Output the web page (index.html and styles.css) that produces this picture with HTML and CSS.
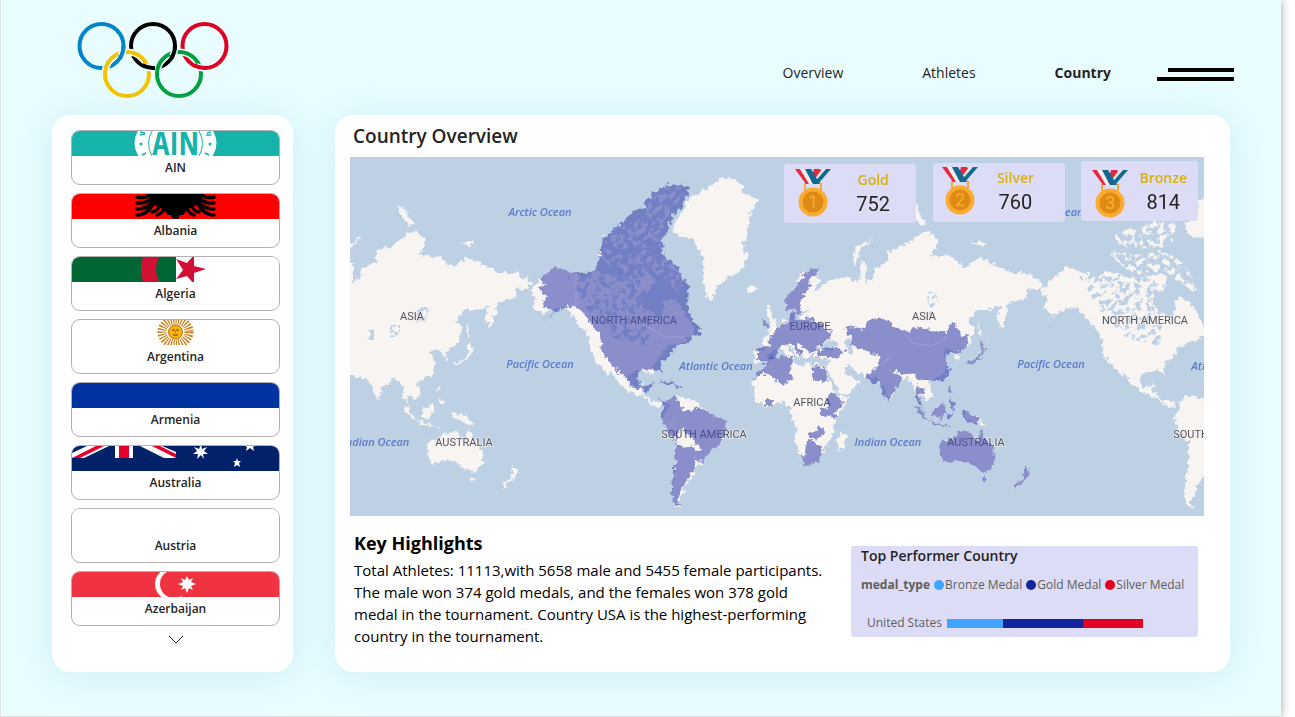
FILE: index.html
```html
<!DOCTYPE html>
<html lang="en">
<head>
<meta charset="utf-8">
<title>Country Overview</title>
<link rel="stylesheet" href="styles.css">
</head>
<body>
<div class="page">
  <header class="header">
    <svg class="rings" viewBox="77 21 152 78" role="img" aria-label="Olympic rings" fill="none">
      <g stroke-width="4">
        <circle cx="101.500" cy="46" r="22" stroke="#0085c7"/>
        <circle cx="153" cy="46" r="22" stroke="#000"/>
        <circle cx="204.500" cy="46" r="22" stroke="#df0024"/>
        <circle cx="127" cy="74" r="22" stroke="#e9fdff" stroke-width="7"/>
        <circle cx="179" cy="74" r="22" stroke="#e9fdff" stroke-width="7"/>
        <circle cx="127" cy="74" r="22" stroke="#f4c300"/>
        <circle cx="179" cy="74" r="22" stroke="#009f3d"/>
      </g>
      <path d="M123.300 49.100A22 22 0 0 1 121.100 56M174.800 49.100A22 22 0 0 1 172.600 56M151.800 68A22 22 0 0 1 144.800 66.400M203.300 68A22 22 0 0 1 196.300 66.400" stroke="#e9fdff" stroke-width="7"/>
      <g stroke-width="4">
        <path d="M123.500 46A22 22 0 0 1 119.500 58.600" stroke="#0085c7"/>
        <path d="M175 46A22 22 0 0 1 171 58.600M154.900 67.900A22 22 0 0 1 142 65" stroke="#000"/>
        <path d="M206.400 67.900A22 22 0 0 1 193.500 65" stroke="#df0024"/>
      </g>
    </svg>
    <nav class="nav">
      <a href="#">Overview</a>
      <a href="#">Athletes</a>
      <a href="#" class="current" aria-current="page">Country</a>
    </nav>
    <button class="menu" aria-label="Menu"><span></span><span></span></button>
  </header>

  <main class="main">
    <aside class="sidebar">
      <button class="country">
        <svg viewBox="0 0 207 25" preserveAspectRatio="xMidYMid slice"><path fill="#17b2aa" d="M0 0h207v25H0z"/><ellipse cx="103.500" cy="12" rx="41" ry="30" fill="#fff"/><g fill="none" stroke="#17b2aa"><path d="M80 0q-7 12 0 25M127 0q7 12 0 25"/></g><circle cx="69" cy="13" r="1.500" fill="#17b2aa"/><circle cx="138" cy="13" r="1.500" fill="#17b2aa"/><path d="M68 1l5 1M68 4l5-1M70 24l4-2M139 1l-4 1M139 4l-5 0M137 24l-4-2" stroke="#17b2aa" stroke-width="1.500"/><text class="ain" x="103.500" y="24" text-anchor="middle">AIN</text></svg>
        <span>AIN</span></button>
      <button class="country">
        <svg viewBox="0 0 207 25" preserveAspectRatio="xMidYMid slice"><path fill="#f00" d="M0 0h207v25H0z"/><path d="M77 0h53l-5 11-9 4-5 6-3 0-2 4h-5l-2-4-3 0-5-6-9-4z"/><g fill="none" stroke="#000" stroke-width="3.400" stroke-linecap="round"><path d="M65 3q7 2 14-3M65 9q11 1 16-7M65 15q11 0 16-8M65 21q11 0 17-13M80 18q6-1 7-6M85 21q6-2 7-7M142 3q-7 2-14-3M142 9q-11 1-16-7M142 15q-11 0-16-8M142 21q-11 0-17-13M127 18q-6-1-7-6M122 21q-6-2-7-7"/></g></svg>
        <span>Albania</span></button>
      <button class="country">
        <svg viewBox="0 0 207 25" preserveAspectRatio="xMidYMid slice"><path fill="#fff" d="M0 0h207v25H0z"/><path fill="#063" d="M0 0h104v25H0z"/><path fill="#d21034" d="M71 0h16q-6 12 0 25H71q-4-13 0-25zM104 2l11 4 7-8v11l12 3-12 4v11l-7-8-11 3 7-9z"/></svg>
        <span>Algeria</span></button>
      <button class="country">
        <svg viewBox="0 0 207 25" preserveAspectRatio="xMidYMid slice"><ellipse cx="103.500" cy="12" rx="13.500" ry="12" fill="none" stroke="#c8801c" stroke-width="9" stroke-dasharray="1.300 1.300"/><circle cx="103.500" cy="12" r="7" fill="#f6b40e" stroke="#b5701a"/><path d="M100 10h3m1 0h3M101 15h5M103 12h1" stroke="#85340a"/></svg>
        <span>Argentina</span></button>
      <button class="country">
        <svg viewBox="0 0 207 25" preserveAspectRatio="xMidYMid slice"><path fill="#0033a0" d="M0 0h207v25H0z"/></svg>
        <span>Armenia</span></button>
      <button class="country">
        <svg viewBox="0 0 207 25" preserveAspectRatio="xMidYMid slice"><path fill="#012169" d="M0 0h207v25H0z"/><path fill="#fff" d="M0 12V7L15 0h22L12 12zM104 12V6L90 0H68l24 12zM43 0h18v12H43z"/><path fill="#e4002b" d="M0 12l24-12h8L8 12zM104 12L80 0h8l16 8zM47 0h10v12H47z"/><path fill="#fff" d="M129-2l1 5 5-2-3 4 4 3-5 0 1 5-3-4-4 4 1-5-5 0 4-3-3-4 5 2zM165 12l1 3h3l-2 2 1 4-3-2-3 2 1-4-2-2h3zM173 0h10l-2 1 1 4-4-3-4 3 1-4z"/></svg>
        <span>Australia</span></button>
      <button class="country">
        <svg viewBox="0 0 207 25" preserveAspectRatio="xMidYMid slice"><path fill="#fff" d="M0 0h207v25H0z"/></svg>
        <span>Austria</span></button>
      <button class="country">
        <svg viewBox="0 0 207 25" preserveAspectRatio="xMidYMid slice"><path fill="#f03340" d="M0 0h207v25H0z"/><circle cx="99" cy="12" r="16" fill="#fff"/><circle cx="102" cy="12" r="14" fill="#f03340"/><path fill="#fff" d="M115 4l2 4 4-2-2 4 5 2-5 2 2 4-4-2-2 5-2-5-4 2 2-4-5-2 5-2-2-4 4 2z"/></svg>
        <span>Azerbaijan</span></button>
      <button class="more" aria-label="Show more countries"><svg viewBox="0 0 16 9"><path d="M1 1l7 7 7-7" fill="none" stroke="#252423"/></svg></button>
    </aside>

    <section class="panel">
      <h1>Country Overview</h1>
      <div class="map">
        <svg class="world" viewBox="350 157 854 359" preserveAspectRatio="xMidYMid slice" role="img" aria-label="World map of medal countries">
          <defs>
            <filter id="coast" filterUnits="userSpaceOnUse" x="340" y="147" width="880" height="380" color-interpolation-filters="sRGB">
              <feTurbulence type="fractalNoise" baseFrequency="0.200" numOctaves="3" seed="4" result="n"/>
              <feDisplacementMap in="SourceGraphic" in2="n" scale="8" xChannelSelector="R" yChannelSelector="G"/>
            </filter>
            <filter id="mottle" filterUnits="userSpaceOnUse" x="340" y="147" width="880" height="380" color-interpolation-filters="sRGB">
              <feTurbulence type="fractalNoise" baseFrequency="0.170" numOctaves="3" seed="9"/>
              <feColorMatrix values="0 0 0 0 0  0 0 0 0 0  0 0 0 0 0  9 0 0 0 -4.400" result="m"/>
              <feComposite in="SourceGraphic" in2="m" operator="in"/>
            </filter>
            <g id="land">
              <path d="M922 233l3-2 12 7 0 8-7 9 22 2 5 6 8 4 14-9 10 4 13 6 10 5 17 0 13 9 0 6-13 1-2 9-18 5-1 9-6 16-4-8 1-10 4-5-13 5-13 0-9 11 6 5-1 9-5 11-10 5 2 8-4-1-3-8-9 0-1 4 5 10-4 11-16 7 4 6 0 8-5 4-6-5-3 7 6 8-7-11-3-12-7-10-13 12-4 12-8-17-5-6-13-2-18-9-2 5 7 5 10 5-10 10-10 3-5-10-8-13 1-13-11-1-4-4-8 4-6-7 0 9-5-7-6-6-5-1 10 10-2 4-11-12-6 2-6 3-4 9-10 1-1-12 12-1-5-10 13-12 7-3 2-8 4 5 11 1 3-9 10-3-15-2-1-10 5-10-4-8 9-10 12 4 5 8-8 2 1 8 12-12 20-5 12 7 3-24 4 5-1 17 8-2 1-10 14-8 0-10 15-5z"/>
              <path d="M820 268l-13 2-12 18-11 12 3 10 8-2 3 9 5-14-1-6 8-10 7-9zM753 397l2 0-2-14 7-11 5-9 7-6 20-1 1 7 9 4 5-4 20 3 0 7 5 14 8 10 8 0-1 6-12 15-2 10 0 9-8 10-2 6-10 12-10 1-2-9-6-14 1-16-6-12 0-8-7-4-18 4zM842 432l5 4-4 14-5-2 0-9zM767 302l4 10 4 8 2 8-9 3 2-10-4-12zM763 321h5v5l-5 2zM747 288l8-2 2 4-6 4-5-2z"/>
              <path d="M939 447l2-6 12-3 5-6 12-1 2 7 6 3 3-13 4 10 6 7 4 8-1 12-6 7-10-2-8-7-10-3-18 3-2-14zM982 478h5l-2 5zM1024 466l7 6-4 6-12 11 0-5 9-6zM965 412l13 4 9 10-8-2-14-7zM913 405l8 4 9 13-6-3zM930 421l22 6-20-2zM933 410l11-7 2 9-7 7-6-4zM949 386l3 6-4-1zM950 397l6 6-3 3zM983 343l-3-2 1 10-4 7-11 5 2 2 12-5 5-12zM979 322l3 16-3-4zM852 262l4-14 18-12-14 14-4 15-4-2zM910 206l4-2 7 12 6 8-5 2-9-10zM970 240l18 4-8 2zM1032 264l4 1z"/>
              <path d="M540 278l15-11 20 6 10 7 8-8 20 4 21 2 15-5 6 6-5 13-6 8 1 11 10 2 5 9 3-20 5-4 9 3 6 9 8 14 4 8-10 9-17 5-9 12-8 9 2 9-5-5-15 0-5 6 1 9 9 1 5-4-3 7 4 5 8 6 12 2-2 4-10-2-10-9-13-4-8-7-10-13-2 3-8-8-10-13-2-19-10-10-7-11-10-7-13 4-20 14 15-11-13-6 5-9-8-8 6-4z"/>
              <path d="M667 402l6-6 10 1 10 3 10 7 9 8 15 6-1 8-6 16-12 8-6 10-7 5 0 7-7 6-3 6-3 9-4 7 5 5-8-2-3-16 4-20 1-27-9-10-6-15 6-10z"/>
              <path d="M673 227l10-17 4-10 13-7 13-10 7-5 12-1 11 8 0 8 16 6-9 14-3 23-5 14 6 5-6 15-12 7-12 9-5 14h-5l-5-21 0-20-5-10-5-10-15-2z"/>
            </g>
            <g id="islands">
              <path d="M597 254l8-6 16 7 16-2 8-4 18 8 14 12 10 20-8 4-12-10-14-12-16 6-20-5zM603 235l35-16 26 6-4 22-40 2-16-6zM645 205l24-20 18 3-18 27-10 12-18-4z"/>
            </g>
            <path id="labrador" d="M567 276h60l20 6-6 24 10 10-3 30-34-8-28-30z"/>
          </defs>
          <rect x="350" y="157" width="854" height="359" fill="#bed0e4"/>
          <g fill="#f7f4f2" filter="url(#coast)">
            <use href="#land" x="-512"/><use href="#land"/><use href="#land" x="512"/>
          </g>
          <g fill="#f7f4f2" filter="url(#mottle)"><use href="#islands"/><use href="#islands" x="512"/></g>
          <g fill="#bed0e4" filter="url(#mottle)"><use href="#labrador"/><use href="#labrador" x="512"/>
            <path d="M415 307h15l-5 15h-10zM390 325h10v12h-10zM927 292h8l4 10-10 14zM364 330h10v10h-10z"/></g>
          <g fill="#bed0e4" filter="url(#coast)"><path d="M821 345l10-5 7 5-8 6-9-1zM845 342l5-3 3 14-5-1zM848 365l7 4-5 1-5-6zM642 290l14 2 8 12-2 10-6 2-10-8-6-4z"/><path d="M1154 290l14 2 8 12-2 10-6 2-10-8-6-4z"/></g>
          <g class="continent" text-anchor="middle">
            <text x="412" y="320">ASIA</text><text x="924" y="320">ASIA</text>
            <text x="634" y="324">NORTH AMERICA</text><text x="1145" y="324">NORTH AMERICA</text>
            <text x="810" y="330">EUROPE</text><text x="812" y="406">AFRICA</text>
            <text x="704" y="438">SOUTH AMERICA</text><text x="1216" y="438">SOUTH AMERICA</text>
            <text x="464" y="446">AUSTRALIA</text><text x="976" y="446">AUSTRALIA</text>
          </g>
          <g class="ocean" text-anchor="middle">
            <text x="540" y="216">Arctic Ocean</text><text x="1052" y="216">Arctic Ocean</text>
            <text x="540" y="368">Pacific Ocean</text><text x="1051" y="368">Pacific Ocean</text>
            <text x="716" y="370">Atlantic Ocean</text><text x="1228" y="370">Atlantic Ocean</text>
            <text x="376" y="446">Indian Ocean</text><text x="888" y="446">Indian Ocean</text>
          </g>
          <g fill="#414ab1" fill-opacity=".6" filter="url(#coast)">
            <path d="M540 278l15-11 20 6 13 0 8-3 4-15 3-17 17-13 17-17 5 1 6-11 14-11 11-3 15 4 1 5-9 15-8 9-5 13-4 8-1 15 13 12 7 10 6 10-1 22 5 11 10 15-2 4-8-2-2 7-13 3-9 12-8 8 3 9-5-4-15-1-5 6 1 10 8 1 6-4-5 10-13-5-8-7-10-13 3 11-8-13-10-13-2-19-10-10-7-11-10-7-13 4-20 14 15-11-13-7 5-8-8-9 6-3z"/>
            <path d="M658 381l8-1 13 6-7 0zM677 387l5-1 2 2zM658 399l9 3 6-6 7 7 3 8 9 0 4-4 7 2 9 6 15 6-1 8-6 16-12 8-6 10-7-1 0 5-2 6-6 6-3 6-3 9-4 7 5 5-8-2-3-16 4-20 1-27-9-10-6-15 4-10zM678 430v6l-1 10 3 0 14 1 2 5 6-2-3-4-4-1-2-7-8-3-1-6zM695 457l6 4-6 2z" fill-rule="evenodd"/>
            <path d="M820 268l-13 2-12 18-11 12 3 10 8-2 3 9 5-14-1-6 8-10-1-9 7-2zM791 312l4 1-1 6-5 1zM805 317l8-1 2 4-8 0zM763 321h5v5l-5 2zM772 335l13-12 9-4 12 1 14 2 6 7 7 3-1 6-9 5-7 7-5 4-6-7-7-4 0 4 5 6-3 4-9-14-12 5-5 11-8 2-8-1 0-12 12-1-1-8zM816 350l16-3 13 3-1 4-8 3-18 0z"/>
            <path d="M753 382l5-9 7-10 7-6 20-1-1 20 2 2-9 7-14-9-5-5-1 5-7 0zM812 366l15 1-2 3 4 11-17 0zM827 395l5-3 5 4 8 7-10 9 0 7-8-4-7 0 0-5 7-3zM766 399h7v7h-7zM808 431l9 1 2-6 5 3-1 6-9 4-6-2zM801 456l5-1 1-15 5 0 6 4 5 6 0 5-10 10-10 1z"/>
            <path d="M844 328l9-1 10 3 4-8 10-4 10 2 10 8 10 4 10-5 23 5 7 0 3-8 6 0 4 10 9 2-5 12-7 5-12 1 2 7 3 10-5 8-10 3-16-2-4-7-11 1-12-4 2 3 9 5-4 7-9 10-2 8-6-12-2-8-6 0-9-7 9-5 4-7 2-8-12-3-8-5-10-2 1-9zM916 385l9 5-1 3-6 1 5 15-7-8zM913 405l8 4 9 13-6-3zM930 421l22 6-20-2zM933 410l11-7 2 9-7 7-6-4zM949 386l3 6-4-1zM949 397l7 6-2 9-4-8zM947 413l6 3-3 4zM961 410l17 7v8l-8-3-9-7zM983 343l-3-2 1 10-4 7-11 5 2 2 12-5 5-12z"/>
            <path d="M939 447l2-6 12-3 5-6 12-1 2 7 6 3 3-13 4 10 6 7 4 8-1 12-6 7-10-2-8-7-10-3-18 3-2-14zM982 478h5l-2 5zM1024 466l7 6-4 6-12 11 0-5 9-6z"/>
          </g>
          <path d="M576 274v31M639 321l25 16 20 0M676 417l-6 8 8 6M905 334l8 9 18 3 16-8M880 365l12-9" fill="none" stroke="#b3b6e2" stroke-opacity=".5"/>
        </svg>

        <article class="medal gold">
          <svg viewBox="0 0 36 48"><use href="#medal"/><text x="18" y="39" text-anchor="middle">1</text></svg>
          <div><h2>Gold</h2><p>752</p></div>
        </article>
        <article class="medal silver">
          <svg viewBox="0 0 36 48"><use href="#medal"/><text x="18" y="39" text-anchor="middle">2</text></svg>
          <div><h2>Silver</h2><p>760</p></div>
        </article>
        <article class="medal bronze">
          <svg viewBox="0 0 36 48">
            <g id="medal">
              <path d="M10 14v7M26 14v7" stroke="#f8a92f" stroke-width="2"/><path d="M10 14h16" stroke="#f8a92f"/>
              <path fill="#e5283f" d="M19 0h5l5 2-9 13h-5z"/>
              <path fill="#dfe6e4" d="M27 0h5L21 15h-5z"/><path fill="#0f6a8f" d="M31 0h5L23 15h-5z"/>
              <path fill="#e5283f" d="M0 0h5l10 15h-4z"/><path fill="#f3eeec" d="M5 0h4l9 15h-4z"/>
              <path fill="#0f6a8f" d="M10 0h6l9 15h-7z"/>
              <circle cx="18" cy="33" r="14.500" fill="#fbac30"/><circle cx="18" cy="33" r="10.500" fill="#de8b16"/>
            </g>
            <text x="18" y="39" text-anchor="middle">3</text></svg>
          <div><h2>Bronze</h2><p>814</p></div>
        </article>
      </div>

      <div class="bottom">
        <section class="highlights">
          <h2>Key Highlights</h2>
          <p>Total Athletes: 11113,with 5658 male and 5455 female participants. The male won 374 gold medals, and the females won 378 gold medal in the tournament. Country USA is the highest-performing country in the tournament.</p>
        </section>
        <section class="performer">
          <h2>Top Performer Country</h2>
          <ul class="legend">
            <li class="legend-title">medal_type</li>
            <li><i class="dot c-bronze"></i>Bronze Medal</li>
            <li><i class="dot c-gold"></i>Gold Medal</li>
            <li><i class="dot c-silver"></i>Silver Medal</li>
          </ul>
          <div class="row">
            <span>United States</span>
            <div class="bar"><i class="c-bronze" style="flex-grow:56"></i><i class="c-gold" style="flex-grow:80"></i><i class="c-silver" style="flex-grow:60"></i></div>
          </div>
        </section>
      </div>
    </section>
  </main>
</div>
</body>
</html>
```

FILE: styles.css
```css
* { box-sizing: border-box; }

body {
  margin: 0;
  background: #fff;
  color: #252423;
  font-family: "Open Sans", "Noto Sans", sans-serif;
}

h1, h2, p, ul { margin: 0; padding: 0; }
button { font: inherit; color: inherit; padding: 0; border: 0; background: none; cursor: pointer; }

.page {
  display: flex;
  flex-direction: column;
  min-height: 717px;
  margin-right: 14px;
  padding: 0 51px 44px 51px;
  background: #e9fdff;
  border-left: 1px solid #dfe6e8;
  border-bottom: 1px solid #dcdfe0;
  box-shadow: 1px 0 8px rgba(0, 0, 0, .3);
}

.header {
  display: flex;
  align-items: center;
  height: 115px;
  flex: none;
}
.rings { width: 152px; height: 78px; margin: 4px 0 0 25px; }
.nav {
  display: flex;
  gap: 79px;
  margin: 30px 46px 0 auto;
  font-size: 14px;
}
.nav a { color: #252423; text-decoration: none; }
.nav .current { font-weight: 700; }
.menu {
  display: flex;
  flex-direction: column;
  align-items: flex-end;
  gap: 5px;
  width: 77px;
  margin: 33px -4px 0 0;
}
.menu span { width: 77px; height: 4px; background: #000; }
.menu span:first-child { width: 66px; }

.main { display: flex; flex: 1; gap: 42px; }

.sidebar, .panel {
  background: #fff;
  border-radius: 18px;
  box-shadow: 0 3px 38px rgba(150, 205, 225, .32);
}

.sidebar {
  display: flex;
  flex-direction: column;
  gap: 8px;
  flex: 0 0 241px;
  padding: 15px 13px 0 19px;
}
.country {
  display: flex;
  flex-direction: column;
  height: 55px;
  border: 1px solid #b3b0ad;
  border-radius: 9px;
  overflow: hidden;
  background: #fff;
  font-size: 12px;
  font-weight: 600;
  line-height: 24px;
  text-align: center;
}
.country svg { display: block; flex: none; width: 100%; height: 25px; }
.country span { width: 100%; }
.ain { font: 700 32px "Open Sans Condensed", "Roboto Condensed", "Liberation Sans Narrow", sans-serif; fill: #17b2aa; }
.more { align-self: center; margin-top: 1px; line-height: 0; }
.more svg { width: 16px; height: 9px; }

.panel {
  display: flex;
  flex-direction: column;
  flex: 1;
  min-width: 0;
  padding: 0 26px 24px 15px;
}
.panel h1 {
  padding: 7px 3px;
  font-size: 19px;
  font-weight: 600;
  line-height: 28px;
}

.map { position: relative; overflow: hidden; }
.world { display: block; width: 100%; height: 359px; }
.continent { font: 400 11px Roboto, sans-serif; fill: #56545c; paint-order: stroke; stroke: #f4f2f2; stroke-opacity: .6; stroke-width: 2px; }
.ocean { font: italic 600 11px "Open Sans", sans-serif; fill: #5b7bc8; }

.medal {
  position: absolute;
  display: flex;
  width: 132px;
  height: 59px;
  padding: 5px 26px 0 11px;
  justify-content: space-between;
  background: #dcdcf6;
  border-radius: 3px;
  text-align: center;
}
.gold { top: 7px; right: 288px; }
.silver { top: 6px; right: 139px; padding: 4px 31px 0 9px; }
.bronze { top: 4px; right: 6px; width: 117px; padding: 6px 11px 0 11px; height: 60px; }
.bronze svg { margin-top: 3px; }
.medal svg { width: 36px; height: 48px; }
.medal text { font: 400 18px Roboto, sans-serif; fill: #fbac30; }
.medal h2 { color: #d8b00f; font-size: 14px; font-weight: 600; line-height: 22px; }
.medal p { font: 400 20px/26px Roboto, sans-serif; }

.bottom {
  display: flex;
  justify-content: space-between;
  align-items: flex-start;
  padding: 14px 6px 0 4px;
  color: #000;
}
.highlights { flex: 0 1 480px; }
.highlights h2 { font-size: 18px; line-height: 26px; }
.highlights p { margin-top: 3px; font-size: 15px; line-height: 22px; }

.performer {
  flex: 0 0 347px;
  height: 91px;
  margin-top: 16px;
  padding: 0 10px;
  background: #dcdcf6;
  border-radius: 3px;
  color: #252423;
}
.performer h2 { font-size: 14px; font-weight: 600; line-height: 20px; }
.legend {
  display: flex;
  gap: 4px;
  margin-top: 10px;
  list-style: none;
  color: #605e5c;
  font-size: 12px;
  line-height: 18px;
}
.legend li { display: flex; align-items: center; white-space: nowrap; gap: 1px; }
.legend-title { font-weight: 700; }
.dot { width: 10px; height: 10px; border-radius: 50%; }
.row {
  display: flex;
  align-items: center;
  gap: 5px;
  margin-top: 20px;
  padding: 0 45px 0 6px;
  color: #605e5c;
  font-size: 12px;
  line-height: 18px;
}
.bar { display: flex; flex: 1; height: 9px; }
.bar i { flex: 1 1 0; }
.c-bronze { background: #41a4ff; }
.c-gold { background: #12239e; }
.c-silver { background: #e1001f; }
```
